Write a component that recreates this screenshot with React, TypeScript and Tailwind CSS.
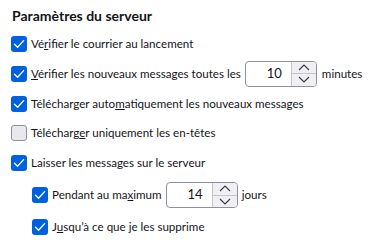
import React from "react";

function Check({ checked }: { checked: boolean }) {
  if (!checked) {
    return <span className="w-[16px] h-[16px] shrink-0 rounded-[3px] border border-[#8f8f9d] bg-[#e9e9ed]" />;
  }
  return (
    <span className="w-[16px] h-[16px] shrink-0 rounded-[3px] bg-[#0061e0] flex items-center justify-center">
      <svg width="12" height="12" viewBox="0 0 12 12" fill="none">
        <path d="M1.5 6.2 L4.6 9.2 L10.6 2.6" stroke="white" strokeWidth="1.3" strokeLinecap="round" strokeLinejoin="round" />
      </svg>
    </span>
  );
}

function Spinner({ value }: { value: string }) {
  return (
    <div className="flex h-[26px] w-[72px] shrink-0 rounded-[4px] border border-[#8f8f9d] bg-white overflow-hidden text-[13px]">
      <div className="flex-1 flex items-center justify-end pr-[9px]">{value}</div>
      <div className="w-[25px] flex flex-col border-l border-[#c5c5c9] bg-[#f0f0f4]">
        <div className="flex-1 flex items-center justify-center border-b border-[#c5c5c9]">
          <svg width="12" height="7" viewBox="0 0 12 7" fill="none">
            <path d="M1 6 L6 1 L11 6" stroke="#3b3b45" strokeWidth="1.1" />
          </svg>
        </div>
        <div className="flex-1 flex items-center justify-center">
          <svg width="12" height="7" viewBox="0 0 12 7" fill="none">
            <path d="M1 1 L6 6 L11 1" stroke="#3b3b45" strokeWidth="1.1" />
          </svg>
        </div>
      </div>
    </div>
  );
}

function Row({ children, indent, h }: { children: React.ReactNode; indent?: boolean; h: string }) {
  return <div className={`flex items-center gap-[4px] whitespace-nowrap ${indent ? "pl-[32px]" : "pl-[11px]"} ${h}`}>{children}</div>;
}

export default function App() {
  return (
    <div className="w-[374px] h-[249px] bg-white text-[#15141a] text-[11.6px] font-['Lato',sans-serif] overflow-hidden">
      <div className="h-[30px] flex items-center pl-[12px] text-[14px] font-bold">Paramètres du serveur</div>
      <Row h="h-[28px]">
        <Check checked />
        <span>Vé<u>r</u>ifier le courrier au lancement</span>
      </Row>
      <Row h="h-[31px]">
        <Check checked />
        <span><u>V</u>érifier les nouveaux messages toutes les</span>
        <Spinner value="10" />
        <span className="ml-[1px]">minutes</span>
      </Row>
      <Row h="h-[29px]">
        <Check checked />
        <span>Télécharger auto<u>m</u>atiquement les nouveaux messages</span>
      </Row>
      <Row h="h-[30px]">
        <Check checked={false} />
        <span>Télécharg<u>e</u>r uniquement les en-têtes</span>
      </Row>
      <Row h="h-[30px]">
        <Check checked />
        <span>Laisser les messa<u>g</u>es sur le serveur</span>
      </Row>
      <Row indent h="h-[34px]">
        <Check checked />
        <span>Pendant au ma<u>x</u>imum</span>
        <Spinner value="14" />
        <span>jours</span>
      </Row>
      <Row indent h="h-[30px]">
        <Check checked />
        <span>J<u>u</u>squ’à ce que je les supprime</span>
      </Row>
    </div>
  );
}
